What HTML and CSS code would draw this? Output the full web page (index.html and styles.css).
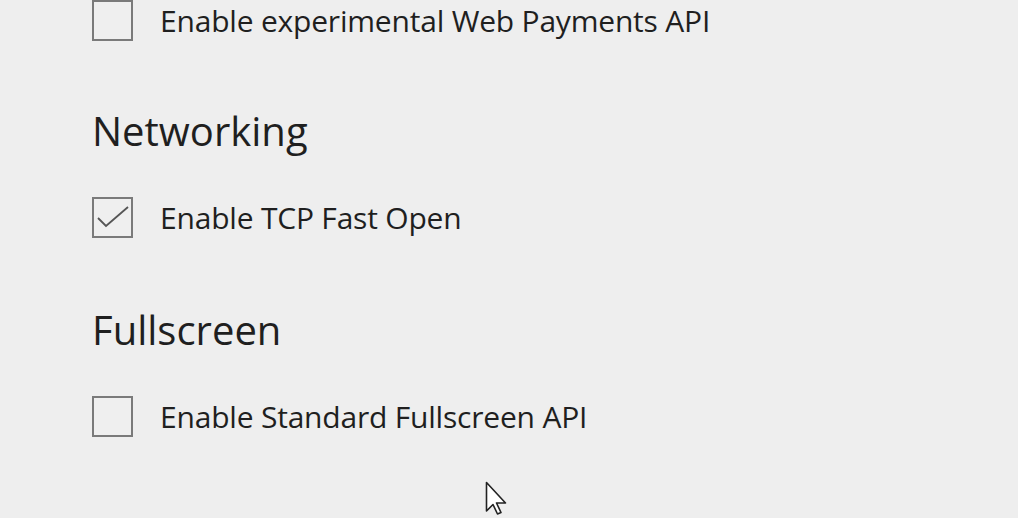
FILE: index.html
```html
<!DOCTYPE html>
<html lang="en">
<head>
    <meta charset="UTF-8">
    <title>Settings</title>
    <link rel="stylesheet" href="styles.css">
</head>
<body>

    <div class="settings">
        <!-- Payments (scrolled, heading is off screen) -->
        <label class="option">
            <span class="box"></span>
            <span class="label">Enable experimental Web Payments API</span>
        </label>

        <section class="group">
            <h2>Networking</h2>
            <label class="option">
                <span class="box checked">
                    <svg width="37" height="37" viewBox="0 0 37 37"><path d="M4 19 L12 27 L34 8" fill="none" stroke="#555" stroke-width="1.8"/></svg>
                </span>
                <span class="label">Enable TCP Fast Open</span>
            </label>
        </section>

        <section class="group">
            <h2>Fullscreen</h2>
            <label class="option">
                <span class="box"></span>
                <span class="label">Enable Standard Fullscreen API</span>
            </label>
        </section>
    </div>

    <svg class="cursor" width="22" height="34" viewBox="0 0 22 34">
        <path d="M1.5 1.5 L1.5 30 L8 23.5 L12.5 33 L16 31.5 L11.5 22 L20.5 22 Z" fill="#fff" stroke="#222" stroke-width="1.6" stroke-linejoin="round"/>
    </svg>

</body>
</html>
```
FILE: styles.css
```css
body {
    margin: 0;
    padding: 0;
    background: #eeeeee;
    font-family: "Open Sans", "Noto Sans", sans-serif;
    color: #1f1f1f;
    height: 518px;
    overflow: hidden;
}
.settings {
    padding-left: 92px;
}
.option {
    display: flex;
    align-items: center;
    height: 41px;
}
.box {
    width: 37px;
    height: 37px;
    border: 2px solid #7a7a7a;
    background: #efefef;
    display: flex;
    align-items: center;
    justify-content: center;
    flex-shrink: 0;
}
.label {
    margin-left: 27px;
    font-size: 30px;
    letter-spacing: -0.2px;
}
.group {
    margin-top: 66px;
}
.group + .group {
    margin-top: 68px;
}
.group h2 {
    font-weight: normal;
    font-size: 40px;
    line-height: 48px;
    margin: 0 0 42px;
}
.cursor {
    position: absolute;
    left: 485px;
    top: 481px;
}
```
